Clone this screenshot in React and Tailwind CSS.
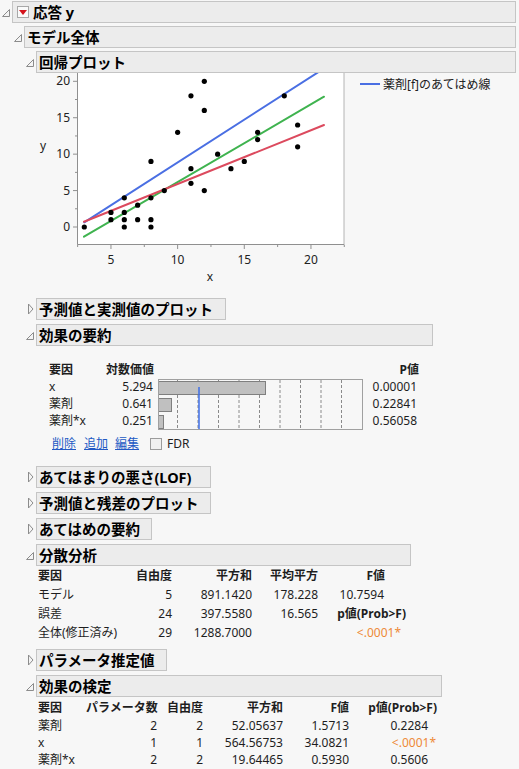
import React from 'react'

const pts = [
  [3, 0], [5, 2], [5, 1], [6, 4], [6, 2], [6, 1], [6, 0], [7, 3], [7, 1], [8, 9], [8, 4], [8, 1], [8, 0],
  [9, 5], [10, 13], [11, 18], [11, 8], [11, 6], [12, 20], [12, 16], [12, 5], [13, 10], [14, 8], [15, 9],
  [16, 13], [16, 12], [18, 18], [19, 14], [19, 11],
]

const px = (x) => 44.3 + 13.333 * x
const py = (y) => 227 - 7.285 * y

function OpenTri() {
  return (
    <svg width="12" height="22" viewBox="0 0 12 22" className="shrink-0">
      <polygon points="9.5,8.5 9.5,15.5 2.5,15.5" fill="#f4f4f4" stroke="#8c8c8c" strokeWidth="1" />
    </svg>
  )
}

function ClosedTri() {
  return (
    <svg width="12" height="22" viewBox="0 0 12 22" className="shrink-0">
      <polygon points="4.5,6 9,11 4.5,16" fill="#f4f4f4" stroke="#8c8c8c" strokeWidth="1" />
    </svg>
  )
}

function Section({ title, open = true, width = 'flex-1 mr-[3px]', icon, top = 'mt-[3px]', children }) {
  return (
    <div className={top}>
      <div className="flex h-[22px]">
        {open ? <OpenTri /> : <ClosedTri />}
        <div className={`flex h-[22px] items-center border border-[#c5c5c5] bg-[#ececec] pl-[2px] ${width}`}>
          {icon}
          <span className="whitespace-nowrap text-[14.5px] font-bold leading-none text-black">{title}</span>
        </div>
      </div>
      {children && <div className="ml-3">{children}</div>}
    </div>
  )
}

function RedMenu() {
  return (
    <span className="ml-[2px] mr-[4px] flex h-[12px] w-[12px] items-center justify-center border border-[#a8a8a8] bg-[#fafafa]">
      <svg width="8" height="5" viewBox="0 0 8 5">
        <polygon points="0,0 8,0 4,5" fill="#d4141c" />
      </svg>
    </span>
  )
}

function RegPlot() {
  const yMaj = [0, 5, 10, 15, 20]
  const yMin = [2.5, 7.5, 12.5, 17.5]
  const xMaj = [5, 10, 15, 20]
  const xMin = [2.5, 7.5, 12.5, 17.5, 22.5]
  return (
    <svg width="483" height="222" viewBox="36 73 483 222" className="block">
      <defs>
        <clipPath id="frame">
          <rect x="78" y="73" width="266" height="171" />
        </clipPath>
      </defs>
      <rect x="78" y="73" width="266" height="171" fill="#ffffff" />
      <line x1="344" y1="73" x2="344" y2="244" stroke="#b4b4b4" />
      <line x1="77.5" y1="73" x2="77.5" y2="244.5" stroke="#8f8f8f" />
      <line x1="77.5" y1="244.5" x2="344" y2="244.5" stroke="#8f8f8f" />
      {yMaj.map((v) => (
        <g key={v}>
          <line x1="73" x2="77.5" y1={py(v)} y2={py(v)} stroke="#8f8f8f" />
          <text x="70" y={py(v) + 4} textAnchor="end" fontSize="12" fill="#222">{v}</text>
        </g>
      ))}
      {yMin.map((v) => (
        <line key={v} x1="75" x2="77.5" y1={py(v)} y2={py(v)} stroke="#8f8f8f" />
      ))}
      {xMaj.map((v) => (
        <g key={v}>
          <line y1="244.5" y2="249" x1={px(v)} x2={px(v)} stroke="#8f8f8f" />
          <text x={px(v)} y="264" textAnchor="middle" fontSize="12" fill="#222">{v}</text>
        </g>
      ))}
      {xMin.map((v) => (
        <line key={v} y1="244.5" y2="247" x1={px(v)} x2={px(v)} stroke="#8f8f8f" />
      ))}
      <text x="43" y="150" textAnchor="middle" fontSize="12" fill="#222">y</text>
      <text x="210" y="281" textAnchor="middle" fontSize="12" fill="#222">x</text>
      <g clipPath="url(#frame)" strokeWidth="2" strokeLinecap="round">
        <line x1="84.3" y1="222.3" x2="324" y2="68.5" stroke="#4a6fe3" />
        <line x1="84" y1="236.7" x2="324" y2="96.7" stroke="#3fb34f" />
        <line x1="84" y1="221.7" x2="324" y2="125" stroke="#dc4a5e" />
      </g>
      {pts.map(([x, y], i) => (
        <circle key={i} cx={px(x)} cy={py(y)} r="2.6" fill="#000" />
      ))}
      <line x1="360" y1="84" x2="380" y2="84" stroke="#4a6fe3" strokeWidth="2" />
      <text x="383" y="88.5" fontSize="12" fill="#222">薬剤[f]のあてはめ線</text>
    </svg>
  )
}

function BarBox() {
  const dashes = [19.5, 40, 60.5, 81, 101.5, 122, 142.5, 163, 183.5]
  return (
    <svg width="205" height="51" className="block">
      {dashes.map((x) => (
        <line key={x} x1={x} x2={x} y1="1" y2="50" stroke="#8a8a8a" strokeDasharray="3 2" />
      ))}
      <rect x="0.5" y="2.5" width="107" height="13" fill="#c0c0c0" stroke="#7f7f7f" />
      <rect x="0.5" y="19.5" width="13" height="13" fill="#c0c0c0" stroke="#7f7f7f" />
      <rect x="0.5" y="36.5" width="5" height="13" fill="#c0c0c0" stroke="#7f7f7f" />
      <line x1="41" x2="41" y1="8" y2="50" stroke="#3e6ee6" strokeWidth="1.5" />
      <rect x="0.5" y="0.5" width="204" height="50" fill="none" stroke="#a0a0a0" />
    </svg>
  )
}

function EffectSummary() {
  const rows = [
    ['x', '5.294', '0.00001'],
    ['薬剤', '0.641', '0.22841'],
    ['薬剤*x', '0.251', '0.56058'],
  ]
  return (
    <div className="whitespace-nowrap pl-[13px] pt-[15px] text-[12px] text-[#1e1e1e]">
      <div className="flex h-[17px] items-center font-bold">
        <div className="w-[57px]">要因</div>
        <div className="w-[48px] text-right">対数価値</div>
        <div className="w-[209px]" />
        <div className="w-[56px] text-right">P値</div>
      </div>
      <div className="flex">
        <div>
          {rows.map((r) => (
            <div key={r[0]} className="flex h-[17px] items-center">
              <div className="w-[57px]">{r[0]}</div>
              <div className="w-[48px] pr-[1px] text-right">{r[1]}</div>
            </div>
          ))}
        </div>
        <div className="ml-[4px] mt-[1px]">
          <BarBox />
        </div>
        <div>
          {rows.map((r) => (
            <div key={r[0]} className="flex h-[17px] w-[56px] items-center justify-end pr-[2px]">{r[2]}</div>
          ))}
        </div>
      </div>
      <div className="mt-[5px] flex h-[17px] items-center pl-[3px]">
        <a className="text-[#2259c4] underline">削除</a>
        <a className="ml-[8px] text-[#2259c4] underline">追加</a>
        <a className="ml-[7px] text-[#2259c4] underline">編集</a>
        <span className="ml-[11px] h-[12px] w-[12px] border border-[#9c9c9c] bg-[#f0f0f0]" />
        <span className="ml-[5px]">FDR</span>
      </div>
    </div>
  )
}

function Anova() {
  const rows = [
    ['モデル', '5', '891.1420', '178.228', <span key="f" className="pr-[22px]">10.7594</span>],
    ['誤差', '24', '397.5580', '16.565', <span key="p" className="font-bold">p値(Prob&gt;F)</span>],
    ['全体(修正済み)', '29', '1288.7000', '', <span key="o" className="pr-[5px] text-[#ee8a38]">&lt;.0001*</span>],
  ]
  return (
    <div className="whitespace-nowrap pl-[2px] text-[12px] text-[#1e1e1e]">
      <div className="flex h-[19px] items-center font-bold">
        <div className="w-[90px]">要因</div>
        <div className="w-[44px] text-right">自由度</div>
        <div className="w-[80px] text-right">平方和</div>
        <div className="w-[66px] text-right">平均平方</div>
        <div className="w-[88px] pr-[21px] text-right">F値</div>
      </div>
      {rows.map((r) => (
        <div key={r[0]} className="flex h-[19px] items-center">
          <div className="w-[90px]">{r[0]}</div>
          <div className="w-[44px] text-right">{r[1]}</div>
          <div className="w-[80px] text-right">{r[2]}</div>
          <div className="w-[66px] text-right">{r[3]}</div>
          <div className="w-[88px] text-right">{r[4]}</div>
        </div>
      ))}
    </div>
  )
}

function EffectTests() {
  const rows = [
    ['薬剤', '2', '2', '52.05637', '1.5713', <span key="a" className="pr-[9px]">0.2284</span>],
    ['x', '1', '1', '564.56753', '34.0821', <span key="b" className="pr-[1px] text-[#ee8a38]">&lt;.0001*</span>],
    ['薬剤*x', '2', '2', '19.64465', '0.5930', <span key="c" className="pr-[9px]">0.5606</span>],
  ]
  return (
    <div className="mt-[2px] whitespace-nowrap pl-[2px] text-[12px] text-[#1e1e1e]">
      <div className="flex h-[18px] items-center font-bold">
        <div className="w-[48px]">要因</div>
        <div className="w-[71px] text-right">パラメータ数</div>
        <div className="w-[46px] text-right">自由度</div>
        <div className="w-[80px] text-right">平方和</div>
        <div className="w-[66px] text-right">F値</div>
        <div className="w-[88px] text-right">p値(Prob&gt;F)</div>
      </div>
      {rows.map((r) => (
        <div key={r[0]} className="flex h-[17px] items-center">
          <div className="w-[48px]">{r[0]}</div>
          <div className="w-[71px] text-right">{r[1]}</div>
          <div className="w-[46px] text-right">{r[2]}</div>
          <div className="w-[80px] text-right">{r[3]}</div>
          <div className="w-[66px] text-right">{r[4]}</div>
          <div className="w-[88px] text-right">{r[5]}</div>
        </div>
      ))}
    </div>
  )
}

export default function App() {
  return (
    <div className="h-[769px] w-[519px] overflow-hidden bg-[#f7f7f7] pt-[1px] font-['Noto_Sans','Noto_Sans_CJK_JP',sans-serif]">
      <Section title="応答 y" icon={<RedMenu />} top="">
        <Section title="モデル全体">
          <Section title="回帰プロット">
            <RegPlot />
          </Section>
          <Section title="予測値と実測値のプロット" open={false} width="w-[190px]" />
          <Section title="効果の要約" width="w-[397px]" top="mt-[4px]">
            <EffectSummary />
          </Section>
          <Section title="あてはまりの悪さ(LOF)" open={false} width="w-[175px]" top="mt-[14px]" />
          <Section title="予測値と残差のプロット" open={false} width="w-[175px]" top="mt-[4px]" />
          <Section title="あてはめの要約" open={false} width="w-[116px]" top="mt-[4px]" />
          <Section title="分散分析" width="w-[375px]" top="mt-[4px]">
            <Anova />
          </Section>
          <Section title="パラメータ推定値" open={false} width="w-[131px]" top="mt-[7px]" />
          <Section title="効果の検定" width="w-[406px]" top="mt-[4px]">
            <EffectTests />
          </Section>
        </Section>
      </Section>
    </div>
  )
}
